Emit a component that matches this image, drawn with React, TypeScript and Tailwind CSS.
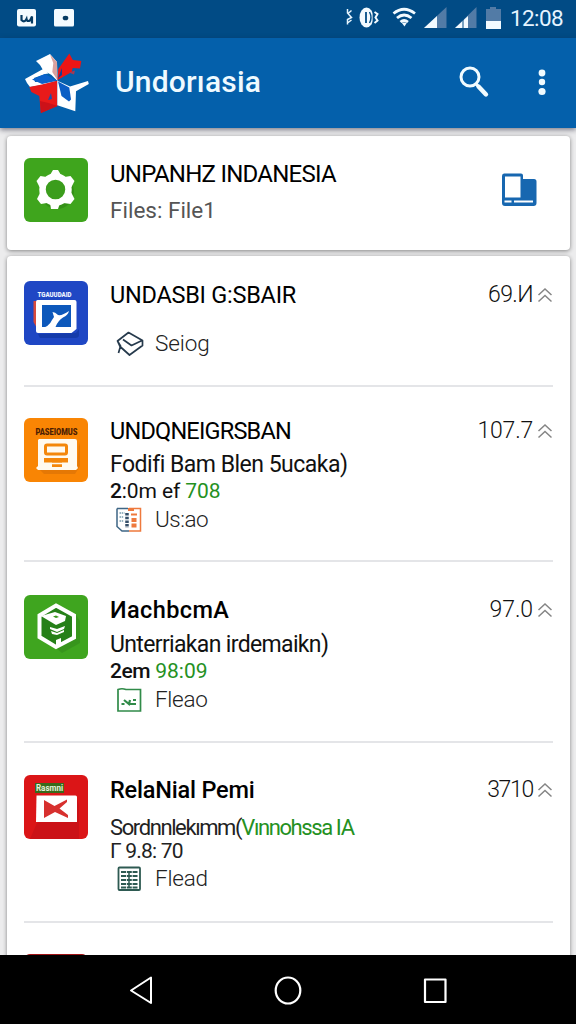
import React from 'react';

type Row = {
  title: React.ReactNode;
  titleClass: string;
  value: string;
  valueClass: string;
  tile: React.ReactNode;
  lines?: React.ReactNode;
  tag: string;
  tagClass: string;
  tagIcon: React.ReactNode;
  className: string;
  headClass?: string;
};

const Logo = () => (
  <svg viewBox="23 51 68 64" className="h-16 w-[68px]">
    <path d="M36 61l4-2 10-5 7 8 .5 19-6-6-8.500-5-3-5z" fill="#fff" />
    <path d="M50 54.500l7 7.500.3 18-5-8 1-9z" fill="#d9a29f" />
    <path d="M57.500 80l.8-11 11-15.500 3.500 6.500 8.500 1-1.300 7.500-7.300-.5-1 4-7 4z" fill="#ec1515" />
    <path d="M58 78l4-10v7z" fill="#143f96" />
    <path d="M69 72.500l6-2-1 4z" fill="#a33a55" />
    <path d="M25 79l19-10.500 4.500 5-3.500.5-11 4 1 4 22-1-15 4-12 2-3-4z" fill="#fff" />
    <path d="M45 74l12.300 6.700L42 84l-10-4.500z" fill="#0b62cb" />
    <path d="M29.300 87L42 84.500l15.300-3.800V106l-16.500 7L39.300 96l-8-4z" fill="#e81a1a" />
    <path d="M40 101l1 12 16.500-7-9-3z" fill="#cc1119" />
    <path d="M48 100l3-7 1 6z" fill="#174fae" />
    <path d="M57.300 80.700L70 86.500l18-5.500.8 3-12.800 7.300-.7 20-18-6z" fill="#fff" />
    <path d="M58 81.500l11.300 6 1.700 12-2 2-7.500-5.500z" fill="#0b5ec5" />
  </svg>
);

const StatusBar = () => (
  <div className="flex h-[38px] shrink-0 items-center bg-[#014b85] text-white">
    <svg viewBox="0 0 80 38" className="h-[38px] w-20">
      <rect x="17" y="9" width="19" height="17.500" rx="2" fill="#f4fbff" />
      <path d="M21.500 15v5q3 3 5-1 .5 3 3.500 1.500l2-4v7" fill="none" stroke="#063b63" strokeWidth="2.200" />
      <rect x="54" y="9" width="20" height="17.500" rx="1.500" fill="#f4fbff" />
      <ellipse cx="65.500" cy="18" rx="2.800" ry="2.300" fill="#063b63" />
    </svg>
    <svg viewBox="0 0 166 38" className="ml-auto h-[38px] w-[166px]">
      <path d="M7.500 9v4l4 4.500-4 2v5M11.500 10.500l-4 3.500M7.500 23l4-3" fill="none" stroke="#e8f6ff" strokeWidth="1.500" />
      <ellipse cx="26.500" cy="17.500" rx="7" ry="10" fill="#f2faff" />
      <path d="M26 12v11" stroke="#014b85" strokeWidth="1.800" />
      <path d="M33.500 7v20" stroke="#014b85" strokeWidth="1.800" />
      <path d="M29.500 12q3 5.500 0 11" fill="none" stroke="#014b85" strokeWidth="1.400" />
      <path d="M34.500 12l3 2-2 3.500 2 3-3 2.500" fill="none" stroke="#f2faff" strokeWidth="2" />
      <g fill="none" stroke="#f2faff" strokeWidth="2.800">
        <path d="M53.500 13.500q10.500-8.500 21.500 0" />
        <path d="M57 18q7-6 14.500 0" />
        <path d="M60.500 22q3.500-3 7.500 0" />
      </g>
      <path d="M61.500 22.500h5.500l-2.500 4z" fill="#f2faff" />
      <path d="M84 28l22.500-21v21z" fill="#527ba6" />
      <path d="M84 28l13-12v12z" fill="#f2faff" />
      <path d="M115 28l21.500-21v21z" fill="#527ba6" />
      <path d="M115 28l13-12v12z" fill="#f2faff" />
      <path d="M123 19v9" stroke="#014b85" strokeWidth="1" />
      <path d="M146 9h4V7h6v2h5v12h-15z" fill="#527ba6" />
      <path d="M146 21h15v8h-15z" fill="#f2faff" />
    </svg>
    <span className="ml-[4px] w-[66px] whitespace-nowrap text-[22.5px] tracking-[-0.6px] text-[#e6f4ff]">12:08</span>
  </div>
);

const AppBar = () => (
  <header className="z-10 flex h-[90px] shrink-0 items-center bg-[#0460ab] pl-[23px] pr-[22px] shadow-[0_2px_5px_rgba(40,40,60,0.55)]">
    <Logo />
    <h1 className="mb-[3px] ml-[24px] whitespace-nowrap text-[30px] font-medium tracking-[0.2px] text-[#effaff]">Undorıasia</h1>
    <svg viewBox="0 0 32 32" className="mb-[3px] ml-auto h-8 w-8" fill="none" stroke="#f1fbff">
      <circle cx="12" cy="11" r="9" strokeWidth="3" />
      <path d="M18 18l3 3" strokeWidth="3" />
      <path d="M20.500 20.500l7.500 8" strokeWidth="4.400" strokeLinecap="round" />
    </svg>
    <svg viewBox="0 0 24 32" className="mb-[2px] ml-[40px] h-8 w-6" fill="#f1fbff">
      <circle cx="12" cy="7" r="3.400" />
      <circle cx="12" cy="16" r="3.200" />
      <circle cx="12" cy="25.500" r="3.600" />
    </svg>
  </header>
);

const GearTile = () => (
  <svg viewBox="0 0 64 64" className="h-16 w-16">
    <rect width="64" height="64" rx="6" fill="#3fa51d" />
    <circle cx="33" cy="34" r="17" fill="#27790f" opacity=".45" />
    <g fill="#fff">
      <path d="M26 17l3-5h5l3 5v7H26z" />
      <path d="M26 45l1 6h7l2-6v-7H26z" />
      <path d="M12.500 23l4-5 6 1 4 7-6 5-5-2z" />
      <path d="M50.500 23l-4-5-6 1-4 7 6 5 5-2z" />
      <path d="M13 41l4 5 6-1 4-7-6-5-5 2z" />
      <path d="M50.500 41l-4 5-7-1-4-7 6-5 6 2z" />
    </g>
    <circle cx="31.500" cy="31.500" r="13" fill="#3b9d1c" stroke="#fff" strokeWidth="6.500" />
  </svg>
);

const BlueTile = () => (
  <svg viewBox="0 0 64 64" className="h-16 w-16">
    <rect width="64" height="64" rx="6" fill="#1f47c4" />
    <path d="M14 53l38-1 3-4v6q0 3-4 3H16z" fill="#153baa" />
    <path d="M9.500 20h5v30l-5-9z" fill="#d84a3c" />
    <path d="M13.500 19h37q2 0 2 2v27l-5 4H14q-2 0-2-2V21q0-2 1.500-2z" fill="#fff" />
    <path d="M18 24h29v22H18z" fill="#0d58bb" />
    <path d="M17 47q8-1 11-8l2-3-1.500-5q2.500 0 5.500 3 4 1 11-4-1 4-6 6.500-5 3-7.500 9.500z" fill="#fff" />
    <text x="13.500" y="16" textLength="34" lengthAdjust="spacingAndGlyphs" fontSize="7.500" fontWeight="900" fill="#eef5ff">TGAUUDAID</text>
  </svg>
);

const OrangeTile = () => (
  <svg viewBox="0 0 64 64" className="h-16 w-16">
    <rect width="64" height="64" rx="6" fill="#f98504" />
    <path d="M16 52h37l2-28 1 4v20l-5 8H20z" fill="#dd7206" opacity=".7" />
    <path d="M15 21h36q2 0 2 2v25l1 2-2 2H14l-2-2 2-2V22z" fill="#fffaf0" />
    <rect x="21.500" y="27" width="21" height="9" rx="1.500" fill="none" stroke="#f4870b" strokeWidth="3" />
    <path d="M20 40h24v4.500h-6V49H28v-4.500h-8z" fill="#f4870b" />
    <path d="M28 45.500h10" stroke="#fffaf0" strokeWidth="1.500" />
    <text x="11.500" y="16.500" textLength="42" lengthAdjust="spacingAndGlyphs" fontSize="8.500" fontWeight="900" fill="#4c1d03">PASEIOMUS</text>
  </svg>
);

const HexTile = () => (
  <svg viewBox="0 0 64 64" className="h-16 w-16">
    <rect width="64" height="64" rx="6" fill="#3fa51f" />
    <path d="M52 20l4 6v22L38 58l-6-5z" fill="#318819" opacity=".55" />
    <path d="M32 10.500L50 20.500v22L32 52 15.500 42V20.500z" fill="#258018" stroke="#fff" strokeWidth="4" />
    <path d="M17 21l14-4 11 4-1 5-9 4z" fill="#fff" />
    <path d="M29 21.500l3-1 3 1.500-3 1z" fill="#3a981d" />
    <path d="M26 32l7 2 8-3-1 3-7 3-7-3z" fill="#fff" />
    <path d="M27 36l6 2 7-3v2l-7 3-5-1z" fill="#fff" />
    <path d="M32 45l5-2v7l-5 2z" fill="#fff" />
  </svg>
);

const RedTile = () => (
  <svg viewBox="0 0 64 64" className="h-16 w-16">
    <rect width="64" height="64" rx="6" fill="#db1517" />
    <path d="M13 48l40-24 2 6v34H6z" fill="#bd1017" opacity=".55" />
    <path d="M11 8h29v10H11z" fill="#376b1b" />
    <path d="M12.500 20.500h39q1.500 0 1.500 1.500v25H12z" fill="#fff" />
    <path d="M20 25l10.500 6L43 24.500v2.500l-7.500 6.500L44 40v3l-13-6-11 6z" fill="#d7302e" />
    <text x="12" y="16" textLength="27" lengthAdjust="spacingAndGlyphs" fontSize="8.500" fontWeight="700" fill="#e7f3dc">Rasmni</text>
  </svg>
);

const DevicesIcon = () => (
  <svg viewBox="0 0 36 34" className="h-[34px] w-9">
    <path d="M3 .5h17q2 0 2 2V6h11q2.500 0 2.500 2.500V30q0 3-3 3H4q-3 0-3-3V3q0-2.500 2-2.500z" fill="#1767b0" />
    <path d="M4 3.500h15.500v21H4z" fill="#fff" />
    <path d="M3.500 28.500h7M13 28.500h19" stroke="#fff" strokeWidth="2" />
  </svg>
);

const ChevronsUp = () => (
  <svg viewBox="0 0 16 16" className="ml-1 h-4 w-4" fill="none" stroke="#858585" strokeWidth="1.500">
    <path d="M1.500 8L8 2l6.500 6M1.500 14.500L8 8.500l6.500 6" />
  </svg>
);

const BookIcon = () => (
  <svg viewBox="0 0 30 26" className="h-[26px] w-[30px]" fill="none" stroke="#263a4c" strokeWidth="1.700" strokeLinejoin="round">
    <path d="M1.500 10L12.500 1.500l14 8v5l-13 9.500-9.500-8.500zM7 8.500l8.500 6 10.500-5M1.500 10l3 5-2 7" />
  </svg>
);

const NewsIcon = () => (
  <svg viewBox="0 0 26 26" className="h-[26px] w-[26px]" fill="none">
    <path d="M1 1.500h11M1 1.500v18l5 4.500h7" stroke="#3e6685" strokeWidth="1.500" />
    <path d="M13 1.500h11.500v22.500H13" stroke="#ee793d" strokeWidth="1.500" />
    <path d="M12 2.500h6" stroke="#ee793d" strokeWidth="3" />
    <path d="M3.500 6h5M3.500 10h4M3.500 14h4" stroke="#779caf" strokeWidth="1.500" strokeDasharray="1.500 .7" />
    <path d="M11 6v15" stroke="#36506a" strokeWidth="3.500" strokeDasharray="2.500 1.200" />
    <path d="M15 7.500h6" stroke="#ee793d" strokeWidth="2" />
    <path d="M18 11v10" stroke="#ee793d" strokeWidth="5" strokeDasharray="4 1.500" />
  </svg>
);

const ChartIcon = () => (
  <svg viewBox="0 0 26 26" className="h-[26px] w-[26px]" fill="none" stroke="#318b49">
    <path d="M2 2.500q4-1.500 8 0h14.500v21.500H2z" strokeWidth="1.700" />
    <path d="M5.500 17h3M8 13l5 4 1-4M14 17h6M17 13h3" strokeWidth="2.200" />
  </svg>
);

const SheetIcon = () => (
  <svg viewBox="0 0 26 26" className="h-[26px] w-[26px]" fill="none" stroke="#2e5a52">
    <rect x="2.500" y="1.500" width="21.500" height="22.500" rx="1" strokeWidth="1.800" />
    <path d="M5 6h16.500M5 10h16.500M5 14h16.500M5 18h16.500M5 21.500h16.500" strokeWidth="2" strokeDasharray="5 .8" />
    <path d="M13 5v16" strokeWidth="1.500" />
  </svg>
);

const rows: Row[] = [
  {
    title: 'UNDASBI G:SBAIR',
    titleClass: 'tracking-[-0.25px]',
    value: '69.И',
    valueClass: 'tracking-[-0.6px]',
    tile: <BlueTile />,
    tag: 'Seiog',
    tagClass: 'tracking-[-0.1px]',
    tagIcon: <BookIcon />,
    className: 'h-[130px] pt-[24px]',
  },
  {
    title: 'UNDQNEIGRSBAN',
    titleClass: 'tracking-[-0.8px]',
    value: '107.7',
    valueClass: 'tracking-[-0.2px]',
    tile: <OrangeTile />,
    lines: (
      <>
        <p className="mt-[6px] h-[28px] text-[23px] leading-[28px] tracking-[-0.5px]">Fodifi Bam Blen 5ucaka)</p>
        <p className="h-[24px] text-[21px] leading-[24px] tracking-[-0.1px]">
          <span className="font-medium">2</span>:0m ef <span className="text-[#25911f]">708</span>
        </p>
      </>
    ),
    tag: 'Us:ao',
    tagClass: 'tracking-[-0.5px]',
    tagIcon: <NewsIcon />,
    className: 'h-[175px] pt-[31px]',
    headClass: '-mt-[1px]',
  },
  {
    title: 'ИachbcmA',
    titleClass: 'font-medium tracking-[0.4px]',
    value: '97.0',
    valueClass: 'tracking-[-0.1px]',
    tile: <HexTile />,
    lines: (
      <>
        <p className="mt-[6px] h-[29px] text-[23px] leading-[29px] tracking-[-0.65px]">Unterriakan irdemaikn)</p>
        <p className="h-[24px] text-[21px] leading-[24px] tracking-[0px]">
          <span className="font-medium tracking-[-0.5px]">2em</span> <span className="text-[#25911f]">98:09</span>
        </p>
      </>
    ),
    tag: 'Fleao',
    tagClass: 'tracking-[-0.3px]',
    tagIcon: <ChartIcon />,
    className: 'h-[181px] pt-[33px]',
    headClass: 'mt-[1px]',
  },
  {
    title: 'RelaNial Pemi',
    titleClass: 'font-medium tracking-[-0.2px]',
    value: '3710',
    valueClass: 'tracking-[-1.3px]',
    tile: <RedTile />,
    lines: (
      <>
        <p className="mt-[11px] h-[26px] text-[22px] leading-[26px] tracking-[-1.4px] text-[#222]">
          Sordnnlekımm(<span className="text-[#25911f]">Vınnohssa IA</span>
        </p>
        <p className="h-[21px] text-[21px] leading-[21px] tracking-[-0.8px] text-[#222]">Г 9.8: 70</p>
      </>
    ),
    tag: 'Flead',
    tagClass: 'tracking-[-0.2px]',
    tagIcon: <SheetIcon />,
    className: 'h-[180px] pt-[32px]',
    headClass: 'mt-[1px]',
  },
];

const ListRow = ({ row }: { row: Row }) => (
  <li className={`mx-[17px] flex shrink-0 border-b-2 border-[#e4e5e8] ${row.className}`}>
    {row.tile}
    <div className="ml-[22px] min-w-0 flex-1 whitespace-nowrap text-[#111]">
      <div className={`flex h-[28px] items-center justify-between ${row.headClass ?? ''}`}>
        <h2 className={`text-[23.5px] leading-[28px] text-black ${row.titleClass}`}>{row.title}</h2>
        <div className="flex items-center text-[23px] font-light text-[#111]">
          <span className={row.valueClass}>{row.value}</span>
          <ChevronsUp />
        </div>
      </div>
      {row.lines}
      <div className={`flex h-[30px] items-center ${row.lines ? 'mt-[2px]' : 'mt-[20px]'}`}>
        <span className="flex w-[45px] pl-[6px]">{row.tagIcon}</span>
        <span className={`text-[22.5px] font-light text-[#222] ${row.tagClass}`}>{row.tag}</span>
      </div>
    </div>
  </li>
);

const NavBar = () => (
  <nav className="z-10 flex h-[69px] shrink-0 items-center justify-between bg-black px-[128px]">
    <svg viewBox="0 0 26 30" className="h-[30px] w-[26px]" fill="none" stroke="#fff" strokeWidth="2" strokeLinejoin="round">
      <path d="M23 2.500v25.500L3 15.500z" />
    </svg>
    <svg viewBox="0 0 28 30" className="h-[30px] w-7" fill="none" stroke="#fff" strokeWidth="2.200">
      <ellipse cx="14" cy="15.500" rx="12.300" ry="13" />
    </svg>
    <svg viewBox="0 0 26 30" className="h-[30px] w-[26px]" fill="none" stroke="#fff" strokeWidth="2.200" strokeLinejoin="round">
      <rect x="3" y="4.500" width="20.500" height="22.500" />
    </svg>
  </nav>
);

export default function App() {
  return (
    <div className="flex h-[1024px] w-[576px] flex-col overflow-hidden bg-[#ececed] font-['Roboto',sans-serif]">
      <StatusBar />
      <AppBar />

      <main className="flex min-h-0 flex-1 flex-col overflow-hidden pl-[7px] pr-[6px] pt-[8px]">
        <section className="flex h-[114px] shrink-0 items-center rounded bg-white pl-[17px] pr-[33px] shadow-[0_1px_4px_rgba(0,0,0,0.45)]">
          <div className="mb-[6px]">
            <GearTile />
          </div>
          <div className="mb-[2px] ml-[22px] flex-1 whitespace-nowrap">
            <h2 className="text-[24px] leading-[36px] tracking-[-0.75px] text-black">UNPANHZ INDANESIA</h2>
            <p className="text-[22.5px] leading-[36px] tracking-[0px] text-[#555]">Files: File1</p>
          </div>
          <div className="mb-[6px]">
            <DevicesIcon />
          </div>
        </section>

        <ul className="mt-[6px] flex shrink-0 flex-col rounded-t bg-white pt-px shadow-[0_1px_4px_rgba(0,0,0,0.45)]">
          {rows.map((row) => (
            <ListRow key={row.tag} row={row} />
          ))}
          {/* next entry, mostly hidden behind the navigation bar */}
          <li className="mx-[17px] flex h-[110px] shrink-0 pt-[31px]">
            <div className="h-16 w-16 rounded-md bg-[#a01214]" />
          </li>
        </ul>
      </main>

      <NavBar />
    </div>
  );
}
